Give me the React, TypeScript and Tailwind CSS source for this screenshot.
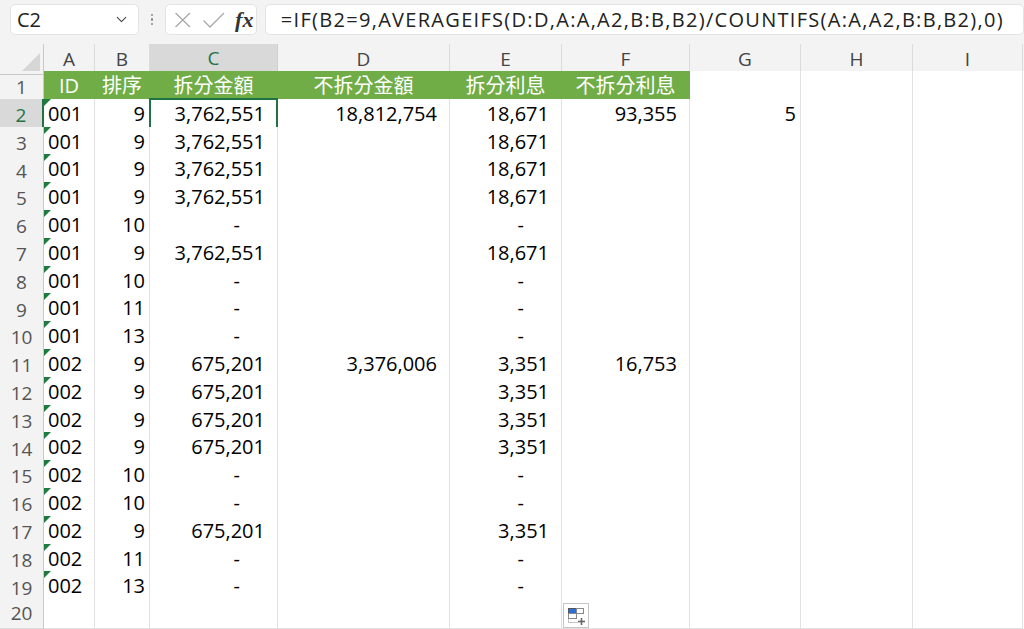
import React from "react";
import { ChevronDown } from "lucide-react";

type Align = "left" | "right" | "rightB" | "center" | "dash" | "none";

const GRID = "grid grid-cols-[44px_51px_55px_128px_172px_112px_128px_111px_112px_110px]";

function Cell({
  v,
  align = "right",
  tri = false,
  green = false,
  selected = false,
}: {
  v?: string;
  align?: Align;
  tri?: boolean;
  green?: boolean;
  selected?: boolean;
}) {
  const alignCls =
    align === "left"
      ? "justify-start pl-[4px]"
      : align === "center"
      ? "justify-center"
      : align === "dash"
      ? "justify-end pr-[37px]"
      : align === "rightB"
      ? "justify-end pr-[4px]"
      : "justify-end pr-[12px]";
  const border = green
    ? "bg-[#70ad47] text-white border-r border-b border-[#70ad47]"
    : "bg-white text-black border-r border-b border-[#e1e1e1]";
  return (
    <div className={`relative flex items-end pb-[3px] overflow-visible whitespace-nowrap ${alignCls} ${border}`}>
      {tri && (
        <svg className="absolute left-0 top-0" width="7" height="7" viewBox="0 0 7 7">
          <polygon points="0,0 7,0 0,7" fill="#1f7a3d" />
        </svg>
      )}
      {v}
      {selected && (
        <div className="absolute left-[-1px] top-[-1px] right-[-1px] bottom-[-1px] border-2 border-[#217346] pointer-events-none">
          <div className="absolute right-[-4px] bottom-[-4px] w-[6px] h-[6px] bg-[#217346] border border-white" />
        </div>
      )}
    </div>
  );
}

function RowHead({ n, active = false }: { n: number; active?: boolean }) {
  return (
    <div
      className={`flex items-center justify-center text-[19px] font-normal border-b ${
        active
          ? "bg-[#d9d9d9] text-[#217346] border-r-2 border-r-[#217346] border-b-[#cfcfcf]"
          : "bg-[#f3f3f3] text-[#555] border-r border-r-[#c8c8c8] border-b-[#dcdcdc]"
      }`}
    >
      {n}
    </div>
  );
}

type RowData = [string, string, string, string, string, string, string];

const rows: RowData[] = [
  ["001", "9", "3,762,551", "18,812,754", "18,671", "93,355", "5"],
  ["001", "9", "3,762,551", "", "18,671", "", ""],
  ["001", "9", "3,762,551", "", "18,671", "", ""],
  ["001", "9", "3,762,551", "", "18,671", "", ""],
  ["001", "10", "-", "", "-", "", ""],
  ["001", "9", "3,762,551", "", "18,671", "", ""],
  ["001", "10", "-", "", "-", "", ""],
  ["001", "11", "-", "", "-", "", ""],
  ["001", "13", "-", "", "-", "", ""],
  ["002", "9", "675,201", "3,376,006", "3,351", "16,753", ""],
  ["002", "9", "675,201", "", "3,351", "", ""],
  ["002", "9", "675,201", "", "3,351", "", ""],
  ["002", "9", "675,201", "", "3,351", "", ""],
  ["002", "10", "-", "", "-", "", ""],
  ["002", "10", "-", "", "-", "", ""],
  ["002", "9", "675,201", "", "3,351", "", ""],
  ["002", "11", "-", "", "-", "", ""],
  ["002", "13", "-", "", "-", "", ""],
];

const colLetters = ["A", "B", "C", "D", "E", "F", "G", "H", "I"];

export default function App() {
  return (
    <div className="relative w-[1024px] h-[629px] overflow-hidden bg-white font-['Open_Sans','Noto_Sans_CJK_TC',sans-serif]">
      {/* Formula bar */}
      <div className="flex items-start pt-[4px] h-[44px] bg-[#f3f3f3]">
        <div className="ml-[10px] w-[132px] h-[31px] bg-white rounded-[5px] border border-[#e3e3e3] flex items-center justify-between pl-[6px] pr-[8px]">
          <span className="text-[20px] text-[#222] leading-none">C2</span>
          <ChevronDown size={17} strokeWidth={1.6} className="text-[#444]" />
        </div>
        <div className="w-[27px] h-[31px] flex flex-col items-center justify-center gap-[2px]">
          <div className="w-[2.5px] h-[2.5px] bg-[#8a8a8a] rounded-full" />
          <div className="w-[2.5px] h-[2.5px] bg-[#8a8a8a] rounded-full" />
          <div className="w-[2.5px] h-[2.5px] bg-[#8a8a8a] rounded-full" />
        </div>
        <div className="w-[94px] h-[31px] bg-white rounded-[5px] border border-[#e3e3e3] flex items-center pl-[7px]">
          <svg width="18" height="18" viewBox="0 0 18 18" className="ml-[1px]">
            <path d="M1.5 2 L16 16 M16 2 L1.5 16" stroke="#a8a8a8" strokeWidth="1.3" fill="none" />
          </svg>
          <svg width="24" height="18" viewBox="0 0 24 18" className="ml-[10px]">
            <path d="M1.5 9.5 L8 16 L22 2" stroke="#a8a8a8" strokeWidth="1.3" fill="none" />
          </svg>
          <span className="ml-[9px] font-['Liberation_Serif',serif] italic font-bold text-[22px] text-[#333] leading-none">fx</span>
        </div>
        <div className="ml-[8px] w-[780px] h-[31px] bg-white rounded-[5px] border border-[#e3e3e3] flex items-center pl-[15px]">
          <span className="text-[20px] tracking-[1.3px] text-[#222] whitespace-nowrap">
            =IF(B2=9,AVERAGEIFS(D:D,A:A,A2,B:B,B2)/COUNTIFS(A:A,A2,B:B,B2),0)
          </span>
        </div>
      </div>

      {/* Column headers */}
      <div className={`${GRID} h-[27px] bg-[#f3f3f3]`}>
        <div className="relative border-r border-b border-[#c8c8c8]">
          <svg className="absolute right-[3px] bottom-[3px]" width="18" height="18" viewBox="0 0 18 18">
            <polygon points="18,0 18,18 0,18" fill="#d6d6d6" />
          </svg>
        </div>
        {colLetters.map((c) => (
          <div
            key={c}
            className={`flex items-center justify-center text-[19px] border-r ${
              c === "C"
                ? "bg-[#d9d9d9] text-[#217346] border-b-2 border-b-[#217346] border-r-[#cfcfcf]"
                : "text-[#444] border-b border-b-[#c8c8c8] border-r-[#dcdcdc]"
            }`}
          >
            {c}
          </div>
        ))}
      </div>

      {/* Row 1 */}
      <div className={`${GRID} h-[27.8px] text-[20px]`}>
        <RowHead n={1} />
        <Cell v="ID" align="center" green />
        <Cell v="排序" align="center" green />
        <Cell v="拆分金額" align="center" green />
        <Cell v="不拆分金額" align="center" green />
        <Cell v="拆分利息" align="center" green />
        <Cell v="不拆分利息" align="center" green />
        <Cell />
        <Cell />
        <Cell />
      </div>

      {rows.map((r, i) => {
        const n = i + 2;
        const dashOr = (s: string): Align => (s === "-" ? "dash" : "right");
        return (
          <div key={n} className={`${GRID} h-[27.8px] text-[20px] font-medium`}>
            <RowHead n={n} active={n === 2} />
            <Cell v={r[0]} align="left" tri />
            <Cell v={r[1]} align="rightB" />
            <Cell v={r[2]} align={dashOr(r[2])} selected={n === 2} />
            <Cell v={r[3]} align="right" />
            <Cell v={r[4]} align={dashOr(r[4])} />
            <Cell v={r[5]} align="right" />
            <Cell v={r[6]} align="rightB" />
            <Cell />
            <Cell />
          </div>
        );
      })}

      {/* Row 20 */}
      <div className={`${GRID} h-[27.8px] text-[20px]`}>
        <RowHead n={20} />
        <Cell />
        <Cell />
        <Cell />
        <Cell />
        <Cell />
        <Cell />
        <Cell />
        <Cell />
        <Cell />
      </div>

      {/* Paste options button */}
      <div className="absolute left-[563px] top-[603px] w-[26px] h-[25px] bg-white border border-[#c6c6c6] flex items-center justify-center">
        <svg width="20" height="20" viewBox="0 0 20 20">
          <rect x="2.5" y="2.5" width="8" height="5" fill="#2b6fdc" stroke="#555" strokeWidth="1" />
          <rect x="10.5" y="2.5" width="7" height="5" fill="#fff" stroke="#888" strokeWidth="1" />
          <rect x="2.5" y="7.5" width="8" height="5" fill="#fff" stroke="#888" strokeWidth="1" />
          <line x1="2.5" y1="16.5" x2="12" y2="16.5" stroke="#888" strokeWidth="1" strokeDasharray="1 1" />
          <line x1="2.5" y1="12.5" x2="2.5" y2="16.5" stroke="#888" strokeWidth="1" strokeDasharray="1 1" />
          <line x1="15.5" y1="12" x2="15.5" y2="19" stroke="#666" strokeWidth="1.6" />
          <line x1="12" y1="15.5" x2="19" y2="15.5" stroke="#666" strokeWidth="1.6" />
        </svg>
      </div>
    </div>
  );
}
